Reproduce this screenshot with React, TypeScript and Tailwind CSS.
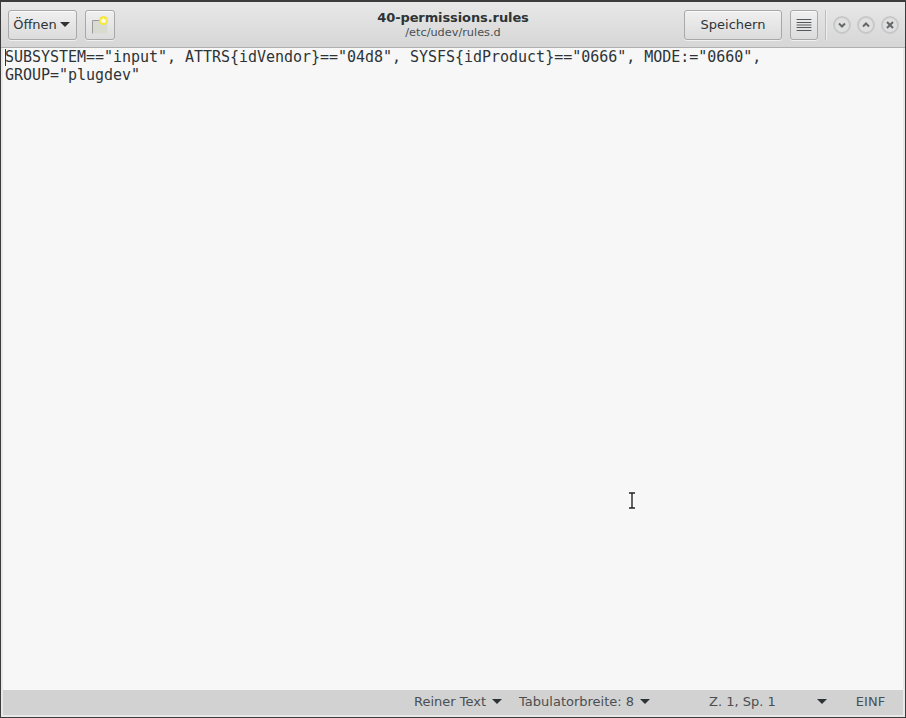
import type { ReactNode } from 'react';

const UI_FONT = "font-['DejaVu_Sans',sans-serif]";

function Caret() {
  return <span className="inline-block w-0 h-0 border-x-[5px] border-x-transparent border-t-[5px] border-t-[#2e3436]" />;
}

function HeaderButton({ className, children }: { className: string; children: ReactNode }) {
  return (
    <button className={`flex items-center justify-center h-[30px] rounded-[3px] border border-[#a8a8a8] bg-gradient-to-b from-[#f0f0f0] to-[#dcdcdc] shadow-[inset_0_1px_0_#fafafa,0_1px_0_#f0f0f0] text-[13px] text-[#2e3436] ${className}`}>
      {children}
    </button>
  );
}

function WindowButton({ children }: { children: ReactNode }) {
  return (
    <div className="flex items-center justify-center w-[18px] h-[18px] rounded-full border-2 border-[#c8c8c8] bg-[#e0e0e0] text-[#62676a]">
      {children}
    </div>
  );
}

function StatusItem({ label, caret = true, className }: { label: string; caret?: boolean; className: string }) {
  return (
    <div className={`flex items-center gap-[6px] ${className}`}>
      <span>{label}</span>
      {caret && <Caret />}
    </div>
  );
}

export default function App() {
  return (
    <div className="w-[906px] h-[718px] overflow-hidden border border-t-0 border-[#3c3c3c]">
      <div className={`flex flex-col h-full border-x-2 border-b-2 border-x-[#e8e8e8] border-b-[#e8e8e8] bg-[#f7f7f7] ${UI_FONT}`}>
        {/* Header bar */}
        <header className="relative -mx-[2px] flex items-center h-[48px] shrink-0 pl-[7px] pr-[6px] border-t-2 border-t-[#3c3c3c] border-b border-b-[#b0b0b0] bg-gradient-to-b from-[#e8e8e8] to-[#d6d6d6]">
          <HeaderButton className="w-[69px] gap-[3px] pr-[2px]">
            <span>Öffnen</span>
            <Caret />
          </HeaderButton>
          <HeaderButton className="w-[30px] ml-2">
            <svg width="20" height="20" viewBox="0 0 20 20">
              <path d="M2.5 18.5V5.5h10v2l5 1.5v9.5z" fill="#d8dbd0" />
              <path d="M2.5 18.5V5.5h9" fill="none" stroke="#9a9a9a" />
              <circle cx="13.5" cy="5.5" r="4.5" fill="#f5e642" />
              <path d="M13.5 2.5l1.1 1.9 2 .3-1.3 1.5.3 2-2.1-.9-2.1.9.3-2-1.3-1.5 2-.3z" fill="#fffef0" />
            </svg>
          </HeaderButton>
          <div className="absolute left-[301px] w-[302px] top-[8px] text-center text-[#2e3436]">
            <div className="text-[13px] leading-[16px] font-bold tracking-[-0.1px]">40-permissions.rules</div>
            <div className="text-[11.3px] leading-[13px] text-[#4a4f51]">/etc/udev/rules.d</div>
          </div>
          <HeaderButton className="w-[98px] ml-auto">Speichern</HeaderButton>
          <HeaderButton className="w-[28px] ml-2">
            <svg width="18" height="16" viewBox="0 0 18 16">
              <path d="M2 2.5h14M2 5.5h14M2 8h14M2 10.5h14M2 13.5h14" stroke="#55595c" strokeLinecap="round" fill="none" />
            </svg>
          </HeaderButton>
          <div className="w-px h-[30px] mx-[7px] bg-[#bcbcbc] shadow-[1px_0_0_#f0f0f0]" />
          <div className="flex gap-[6px]">
            <WindowButton>
              <svg width="10" height="10" viewBox="0 0 10 10"><path d="M2 3.5l3 3 3-3" fill="none" stroke="currentColor" strokeWidth="2" /></svg>
            </WindowButton>
            <WindowButton>
              <svg width="10" height="10" viewBox="0 0 10 10"><path d="M2 6.5l3-3 3 3" fill="none" stroke="currentColor" strokeWidth="2" /></svg>
            </WindowButton>
            <WindowButton>
              <svg width="10" height="10" viewBox="0 0 10 10"><path d="M2 2l6 6M8 2l-6 6" fill="none" stroke="currentColor" strokeWidth="2" /></svg>
            </WindowButton>
          </div>
        </header>

        {/* Text view */}
        <main className="relative flex-1 pl-[2px] bg-[#f7f7f7] font-['DejaVu_Sans_Mono',monospace] text-[15px] leading-[18px] tracking-[-0.03px] text-[#2e3436]">
          <span className="absolute left-[2px] top-[1px] w-px h-[17px] bg-[#2e3436]" />
          <div>SUBSYSTEM=="input", ATTRS{'{'}idVendor{'}'}=="04d8", SYSFS{'{'}idProduct{'}'}=="0666", MODE:="0660",</div>
          <div>GROUP="plugdev"</div>
          <svg className="absolute left-[624px] top-[443px]" width="10" height="20" viewBox="0 0 10 20">
            <path d="M2 2h6M5 2v15M2 17h6" fill="none" stroke="#fff" strokeWidth="3" />
            <path d="M2 2h6M5 2v15M2 17h6" fill="none" stroke="#222" strokeWidth="1.4" />
          </svg>
        </main>

        {/* Status bar */}
        <footer className="flex items-center h-[25px] shrink-0 pb-[2px] bg-[#d2d2d2] text-[13px] text-[#4a4f51]">
          <StatusItem label="Reiner Text" className="ml-[411px]" />
          <StatusItem label="Tabulatorbreite: 8" className="ml-[17px]" />
          <StatusItem label="Z. 1, Sp. 1" caret={false} className="ml-[59px]" />
          <div className="ml-[41px] flex"><Caret /></div>
          <span className="ml-[29px]">EINF</span>
        </footer>
      </div>
    </div>
  );
}
